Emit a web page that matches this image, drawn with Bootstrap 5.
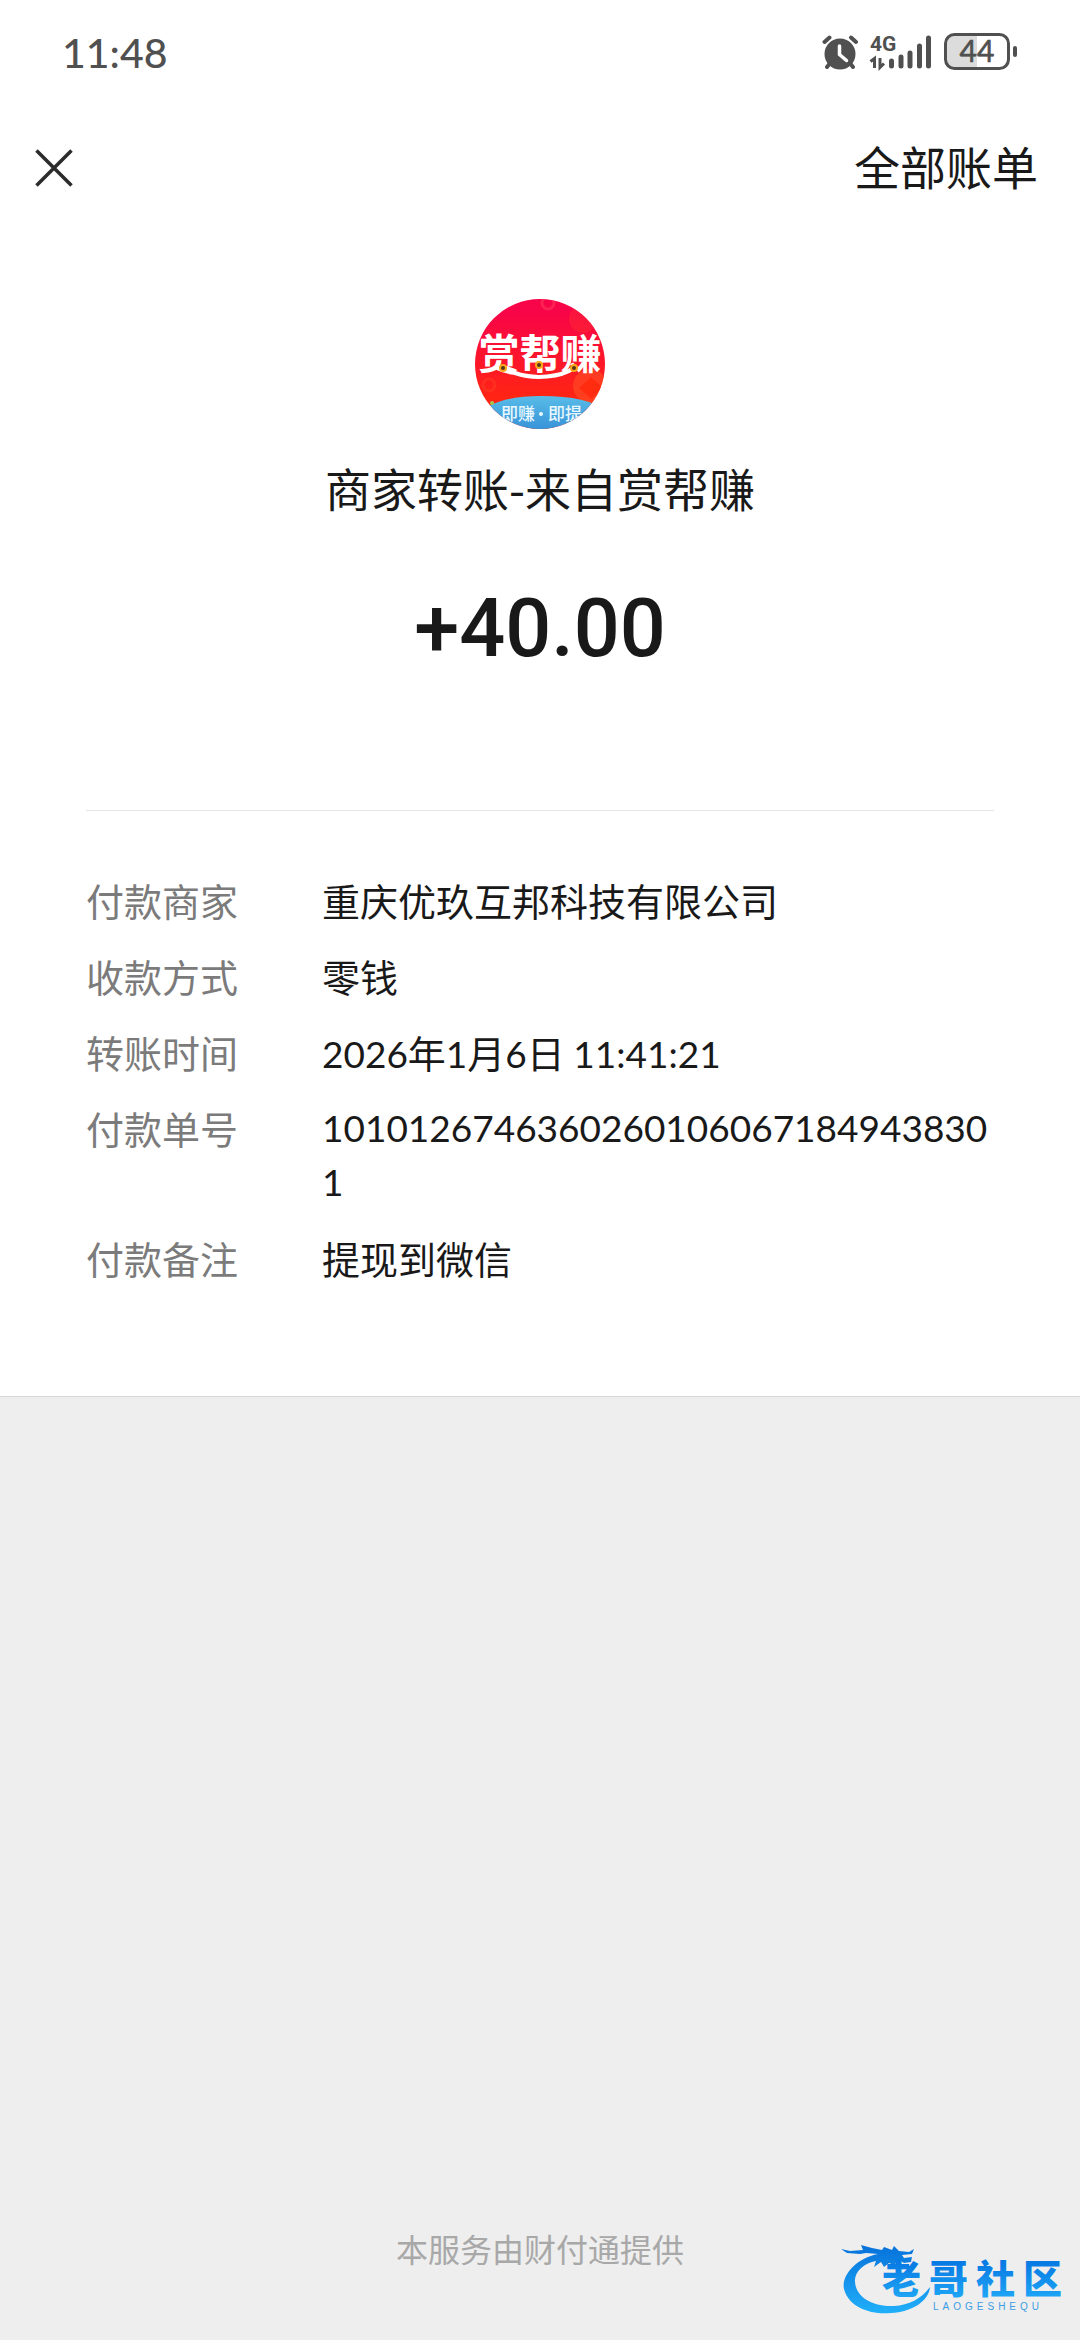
<!DOCTYPE html>
<html lang="zh-CN">
<head>
<meta charset="utf-8">
<meta name="viewport" content="width=device-width, initial-scale=1">
<title>账单详情</title>
<link href="https://cdn.jsdelivr.net/npm/bootstrap@5.3.0/dist/css/bootstrap.min.css" rel="stylesheet">
<style>
  body { background: #eee; color: #191919; font-family: "Noto Sans CJK SC", sans-serif; font-size: 38px; line-height: 54px; }
  .status-bar { height: 106px; padding: 0 62px; color: #505050; }
  .clock { font-family: Lato, sans-serif; font-size: 41px; font-weight: 500; }
  .top-bar { height: 124px; padding: 0 42px 0 24px; font-size: 46px; }
  .bills-link { padding-bottom: 6px; }
  .close-btn { width: 60px; height: 60px; color: #2b2b2b; }
  .summary { padding: 69px 86px 0; }
  .payee { font-size: 46px; line-height: 64px; margin-top: 26px; }
  .amount { font-family: Roboto, sans-serif; font-size: 81px; line-height: 96px; font-weight: 500; margin-top: 62px; }
  .details { margin: 133px 86px 0; padding: 62px 0 111px; border-top: 1px solid #e5e5e5; }
  .details dl { gap: 22px; }
  .details dt { width: 236px; color: #7b7b7b; }
  .num { font-family: Lato, sans-serif; font-size: 37px; }
  span.num { line-height: 1; }
  .receipt { border-bottom: 1px solid #d8d8d8; }
  .provider { padding-bottom: 64px; font-size: 32px; line-height: 56px; color: #a8a8a8; }
  .watermark { right: 10px; bottom: 20px; }
</style>
</head>
<body>
<div class="min-vh-100 d-flex flex-column position-relative">
  <main class="receipt bg-white">
    <div class="status-bar d-flex align-items-center justify-content-between">
      <span class="clock">11:48</span>
      <svg width="196" height="40" viewBox="820 33 196 40" role="img" aria-label="闹钟 4G 电量 44">
        <g fill="none" stroke="#505050" stroke-linecap="round">
          <path stroke-width="4" d="M822.500 42l5-4.500M854 42l-5-4.500M829 62l-4 5M847 62l4 5"/>
          <path stroke-width="5" d="M889.500 61v5M899 57v9M908 53v13M917.500 46v20M926.500 38v28"/>
        </g>
        <circle cx="838" cy="54" r="15.500" fill="#505050"/>
        <path d="M837.500 46v8.500l7 6" fill="none" stroke="#fff" stroke-width="3.500" stroke-linecap="round"/>
        <text x="868" y="51" font-family="Roboto, sans-serif" font-size="21" font-weight="700" fill="#505050">4G</text>
        <path d="M868.500 61.500l4-3v9.500M878 58v9.500l4-4" fill="none" stroke="#505050" stroke-width="3"/>
        <path d="M953 35h22v33h-22q-9 0-9-9V44q0-9 9-9z" fill="#dcdcdc"/>
        <rect x="943.500" y="34.500" width="63" height="34" rx="9" fill="none" stroke="#505050" stroke-width="3"/>
        <rect x="1011" y="46" width="4" height="11" rx="2" fill="#505050"/>
        <text x="975" y="62" text-anchor="middle" font-family="Lato, sans-serif" font-size="30" fill="#505050" stroke="#505050" stroke-width=".6">44</text>
      </svg>
    </div>
    <header class="top-bar d-flex align-items-center justify-content-between">
      <button type="button" class="close-btn btn p-0 border-0 d-flex align-items-center justify-content-center" aria-label="关闭">
        <svg width="38" height="38" viewBox="0 0 38 38"><path d="M1.500 1.500l35 35M36.500 1.500l-35 35" stroke="currentColor" stroke-width="3.500"/></svg>
      </button>
      <a href="#" class="bills-link text-reset text-decoration-none">全部账单</a>
    </header>
    <section class="summary d-flex flex-column align-items-center text-center">
      <svg width="130" height="130" viewBox="0 0 130 130" role="img" aria-label="赏帮赚">
        <defs>
          <clipPath id="disc"><circle cx="65" cy="65" r="65"/></clipPath>
          <linearGradient id="red" x2="0" y2="1"><stop offset=".1" stop-color="#f80448"/><stop offset=".75" stop-color="#ff2414"/></linearGradient>
          <linearGradient id="sky" x2="0" y2="1"><stop stop-color="#58bce8"/><stop offset="1" stop-color="#3893d8"/></linearGradient>
        </defs>
        <g clip-path="url(#disc)">
          <rect width="130" height="130" fill="url(#red)"/>
          <circle cx="108" cy="20" r="14" fill="#ff3030" opacity=".4"/>
          <circle cx="73" cy="4" r="6" fill="none" stroke="#ff4060" stroke-width="3" opacity=".5"/>
          <circle cx="14" cy="86" r="6" fill="none" stroke="#ff5030" stroke-width="3" opacity=".3"/>
          <circle cx="115" cy="87" r="17" fill="#ff5024" opacity=".6"/>
          <path d="M104 89l12-11 12 11-12 11z" fill="#ff2c10"/>
          <path d="M0 118Q18 97 66 97T130 112v18H0z" fill="url(#sky)"/>
          <text x="65" y="70" text-anchor="middle" font-family="'Noto Sans CJK SC', sans-serif" font-size="41" font-weight="700" fill="#fff">赏帮赚</text>
          <path d="M22 69q8 4 18 5c20 7 46 4 59-5" fill="none" stroke="#fff" stroke-width="4" stroke-linecap="round"/>
          <g fill="#573419" stroke="#f6a818" stroke-width="2"><circle cx="28" cy="69" r="3"/><circle cx="64" cy="66" r="3"/><circle cx="99" cy="69" r="3"/></g>
          <circle cx="17" cy="104" r="2" fill="#a6c850"/>
          <circle cx="66" cy="115" r="2" fill="#e9f8ff"/>
          <g font-family="'Noto Sans CJK SC', sans-serif" font-size="17" font-weight="500" fill="#e9f8ff"><text x="26" y="121">即赚</text><text x="73" y="121">即提</text></g>
        </g>
      </svg>
      <div class="payee">商家转账-来自赏帮赚</div>
      <div class="amount">+40.00</div>
    </section>
    <section class="details">
      <dl class="d-flex flex-column mb-0">
        <div class="d-flex"><dt class="fw-normal flex-shrink-0">付款商家</dt><dd class="mb-0 text-break">重庆优玖互邦科技有限公司</dd></div>
        <div class="d-flex"><dt class="fw-normal flex-shrink-0">收款方式</dt><dd class="mb-0 text-break">零钱</dd></div>
        <div class="d-flex"><dt class="fw-normal flex-shrink-0">转账时间</dt><dd class="mb-0 text-break"><span class="num">2026</span>年<span class="num">1</span>月<span class="num">6</span>日 <span class="num">11:41:21</span></dd></div>
        <div class="d-flex"><dt class="fw-normal flex-shrink-0">付款单号</dt><dd class="num mb-0 text-break">10101267463602601060671849438301</dd></div>
        <div class="d-flex"><dt class="fw-normal flex-shrink-0">付款备注</dt><dd class="mb-0 text-break">提现到微信</dd></div>
      </dl>
    </section>
  </main>
  <footer class="provider mt-auto text-center">本服务由财付通提供</footer>
  <svg class="watermark position-absolute" width="230" height="76" viewBox="840 2244 230 76" role="img" aria-label="老哥社区 LAOGESHEQU">
    <defs>
      <linearGradient id="blue" gradientUnits="userSpaceOnUse" x1="0" y1="2248" x2="0" y2="2314"><stop stop-color="#0874dc"/><stop offset="1" stop-color="#20b0fa"/></linearGradient>
      <linearGradient id="word" gradientUnits="userSpaceOnUse" x1="0" y1="2264" x2="0" y2="2300"><stop stop-color="#087ce4"/><stop offset="1" stop-color="#20a8f6"/></linearGradient>
    </defs>
    <path fill="url(#blue)" d="M878 2254C856 2258 841 2276 844 2289C849 2308 872 2315 891 2313C912 2312 929 2301 930 2287C921 2299 909 2305 894 2306C874 2307 856 2298 855 2282C854 2272 864 2263 876 2261L874 2267L881 2262L884 2267L889 2263L894 2265L899 2260L904 2263L911 2262L912 2257L904 2258L902 2255L912 2254L914 2249L909 2252L899 2251L894 2246L892 2250L884 2247L882 2250L872 2248L861 2245L863 2250L850 2251L841 2249L847 2253L860 2254L866 2253Z"/>
    <g font-family="'Noto Sans CJK SC', sans-serif" font-size="39" font-weight="900" fill="url(#word)"><text x="882" y="2293">老</text><text x="929" y="2293">哥</text><text x="976" y="2293">社</text><text x="1023" y="2293">区</text></g>
    <text x="933" y="2310" font-family="'Liberation Sans', sans-serif" font-size="10" letter-spacing="4" fill="#3b9de5">LAOGESHEQU</text>
  </svg>
</div>
<script src="https://cdn.jsdelivr.net/npm/bootstrap@5.3.0/dist/js/bootstrap.bundle.min.js"></script>
</body>
</html>
